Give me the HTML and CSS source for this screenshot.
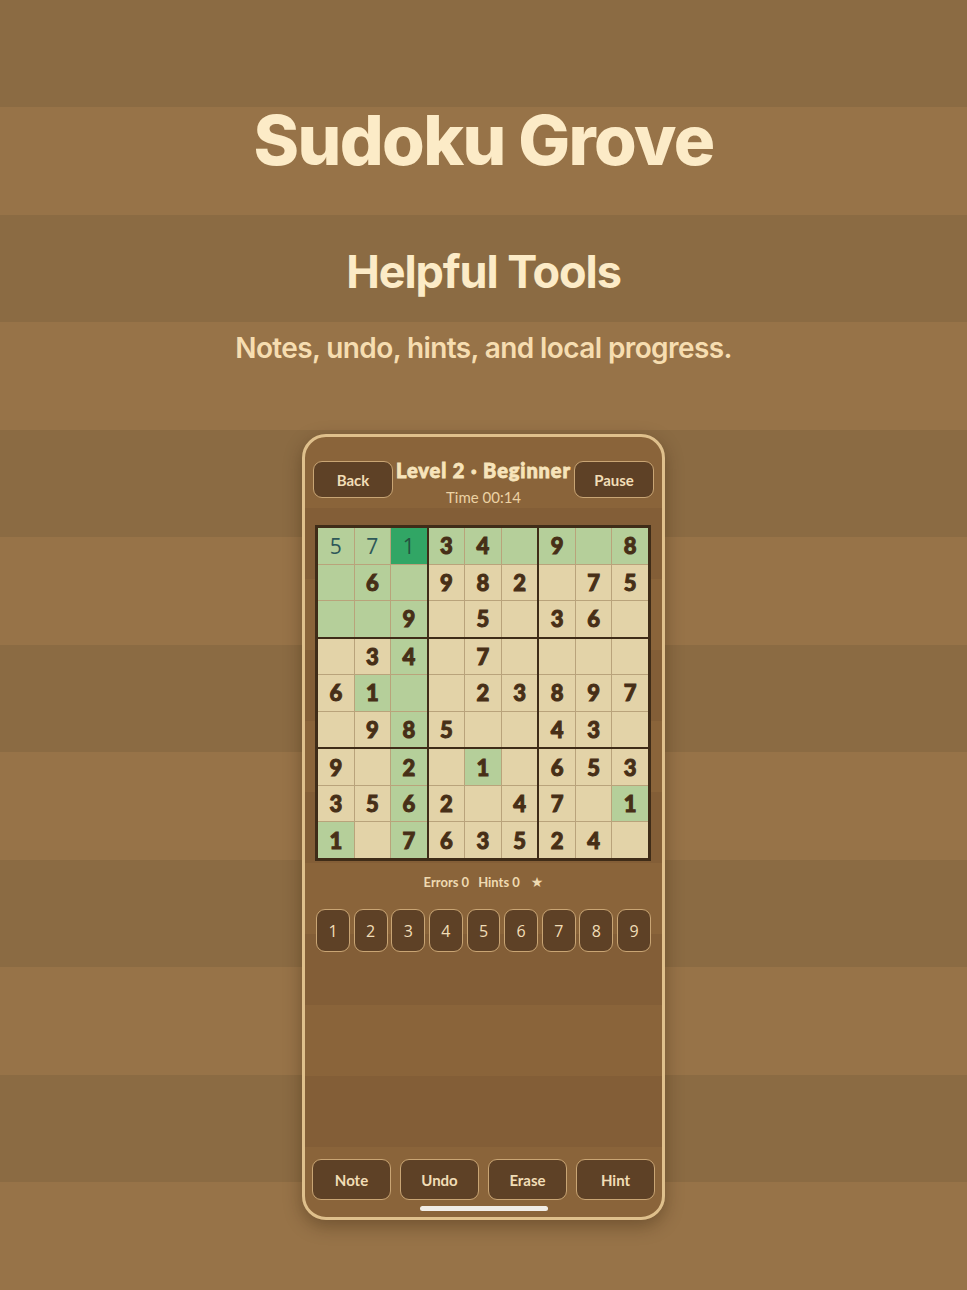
FILE: index.html
```html
<!DOCTYPE html>
<html lang="en">
<head>
<meta charset="utf-8">
<title>Sudoku Grove</title>
<link rel="stylesheet" href="styles.css">
</head>
<body>
<main class="page">
  <h1 class="app-title">Sudoku Grove</h1>
  <h2 class="feature-title">Helpful Tools</h2>
  <p class="feature-text">Notes, undo, hints, and local progress.</p>

  <div class="phone">
    <header class="game-bar">
      <button class="btn btn-bar">Back</button>
      <div class="game-info">
        <div class="level">Level 2 · Beginner</div>
        <div class="timer">Time 00:14</div>
      </div>
      <button class="btn btn-bar">Pause</button>
    </header>

    <div class="board">
      <div class="box">
        <div class="cell hl user">5</div><div class="cell hl user">7</div><div class="cell sel user">1</div>
        <div class="cell hl"></div><div class="cell hl">6</div><div class="cell hl"></div>
        <div class="cell hl"></div><div class="cell hl"></div><div class="cell hl">9</div>
      </div>
      <div class="box">
        <div class="cell hl">3</div><div class="cell hl">4</div><div class="cell hl"></div>
        <div class="cell">9</div><div class="cell">8</div><div class="cell">2</div>
        <div class="cell"></div><div class="cell">5</div><div class="cell"></div>
      </div>
      <div class="box">
        <div class="cell hl">9</div><div class="cell hl"></div><div class="cell hl">8</div>
        <div class="cell"></div><div class="cell">7</div><div class="cell">5</div>
        <div class="cell">3</div><div class="cell">6</div><div class="cell"></div>
      </div>

      <div class="box">
        <div class="cell"></div><div class="cell">3</div><div class="cell hl">4</div>
        <div class="cell">6</div><div class="cell hl">1</div><div class="cell hl"></div>
        <div class="cell"></div><div class="cell">9</div><div class="cell hl">8</div>
      </div>
      <div class="box">
        <div class="cell"></div><div class="cell">7</div><div class="cell"></div>
        <div class="cell"></div><div class="cell">2</div><div class="cell">3</div>
        <div class="cell">5</div><div class="cell"></div><div class="cell"></div>
      </div>
      <div class="box">
        <div class="cell"></div><div class="cell"></div><div class="cell"></div>
        <div class="cell">8</div><div class="cell">9</div><div class="cell">7</div>
        <div class="cell">4</div><div class="cell">3</div><div class="cell"></div>
      </div>

      <div class="box">
        <div class="cell">9</div><div class="cell"></div><div class="cell hl">2</div>
        <div class="cell">3</div><div class="cell">5</div><div class="cell hl">6</div>
        <div class="cell hl">1</div><div class="cell"></div><div class="cell hl">7</div>
      </div>
      <div class="box">
        <div class="cell"></div><div class="cell hl">1</div><div class="cell"></div>
        <div class="cell">2</div><div class="cell"></div><div class="cell">4</div>
        <div class="cell">6</div><div class="cell">3</div><div class="cell">5</div>
      </div>
      <div class="box">
        <div class="cell">6</div><div class="cell">5</div><div class="cell">3</div>
        <div class="cell">7</div><div class="cell"></div><div class="cell hl">1</div>
        <div class="cell">2</div><div class="cell">4</div><div class="cell"></div>
      </div>
    </div>

    <div class="status">
      <span>Errors 0</span><span>Hints 0</span><span class="star">★</span>
    </div>

    <div class="numpad">
      <button class="btn key">1</button>
      <button class="btn key">2</button>
      <button class="btn key">3</button>
      <button class="btn key">4</button>
      <button class="btn key">5</button>
      <button class="btn key">6</button>
      <button class="btn key">7</button>
      <button class="btn key">8</button>
      <button class="btn key">9</button>
    </div>

    <div class="spacer"></div>

    <div class="tools">
      <button class="btn tool">Note</button>
      <button class="btn tool">Undo</button>
      <button class="btn tool">Erase</button>
      <button class="btn tool">Hint</button>
    </div>
    <div class="home-indicator"></div>
  </div>
</main>
</body>
</html>
```

FILE: styles.css
```css
* {
  box-sizing: border-box;
}

html,
body {
  margin: 0;
  padding: 0;
}

body {
  width: 967px;
  height: 1290px;
  overflow: hidden;
  font-family: Inter, "Noto Sans", sans-serif;
  background: repeating-linear-gradient(
    to bottom,
    #8b6b43 0,
    #8b6b43 107.5px,
    #977348 107.5px,
    #977348 215px
  );
}

.page {
  display: flex;
  flex-direction: column;
  align-items: center;
  padding-top: 102px;
}

.app-title {
  margin: 0;
  font-size: 69px;
  line-height: 76px;
  font-weight: 800;
  letter-spacing: -1.6px;
  color: #fcebc7;
}

.feature-title {
  margin: 68px 0 0;
  font-size: 45px;
  line-height: 52px;
  font-weight: 700;
  letter-spacing: -1.1px;
  color: #fcebc7;
}

.feature-text {
  margin: 34px 0 0;
  font-size: 28px;
  line-height: 32px;
  font-weight: 600;
  letter-spacing: -0.6px;
  color: #f6ddb0;
}

/* device frame */
.phone {
  margin-top: 70px;
  width: 363px;
  height: 786px;
  border: 3px solid #dfc08c;
  border-radius: 24px;
  box-shadow: 0 6px 18px rgba(40, 22, 5, 0.35);
  display: flex;
  flex-direction: column;
  overflow: hidden;
  background: repeating-linear-gradient(
    to bottom,
    #8a643a 0,
    #8a643a 71px,
    #835e37 71px,
    #835e37 142px
  );
  font-family: Lato, "Open Sans", sans-serif;
}

.btn {
  font-family: Lato, "Open Sans", sans-serif;
  background: #5e4126;
  border: 1px solid #c9a574;
  border-radius: 9px;
  color: #f1ddb6;
  padding: 0;
  cursor: pointer;
}

.game-bar {
  display: flex;
  align-items: flex-start;
  padding: 24px 8px 0 8px;
  height: 88px;
}

.btn-bar {
  width: 80px;
  height: 37px;
  font-size: 15px;
  font-weight: 700;
}

.game-info {
  flex: 1;
  display: flex;
  flex-direction: column;
  align-items: center;
  margin-top: -3px;
}

/* heavy headline: bold face thickened with a stroke */
.level {
  font-size: 20px;
  line-height: 24px;
  font-weight: 900;
  color: #f7e4bb;
  white-space: nowrap;
  letter-spacing: 0.9px;
  -webkit-text-stroke: 0.8px #f7e4bb;
}

.timer {
  margin-top: 7px;
  font-size: 15px;
  line-height: 16px;
  font-weight: 400;
  color: #ecd2a4;
}

/* sudoku board: 3x3 boxes, each 3x3 cells */
.board {
  margin: 0 0 0 10px;
  width: 336px;
  height: 336px;
  border: 3px solid #3f2c18;
  background: #3f2c18;
  display: grid;
  grid-template-columns: repeat(3, 1fr);
  grid-template-rows: repeat(3, 1fr);
  gap: 2px;
}

.box {
  display: grid;
  grid-template-columns: repeat(3, 1fr);
  grid-template-rows: repeat(3, 1fr);
  gap: 1px;
  background: #b9a37b;
}

.cell {
  background: #e3d3a8;
  display: flex;
  align-items: center;
  justify-content: center;
  font-family: Lato, sans-serif;
  font-size: 22px;
  font-weight: 900;
  color: #472f17;
  -webkit-text-stroke: 1px #472f17;
}

.cell.hl {
  background: #b5cf9a;
}

.cell.sel {
  background: #31a665;
}

.cell.user {
  font-family: "Open Sans", sans-serif;
  font-weight: 400;
  font-size: 21px;
  color: #2e5859;
  -webkit-text-stroke: 0;
}

.cell.sel.user {
  color: #25523f;
}

.status {
  display: flex;
  justify-content: center;
  gap: 9px;
  margin-top: 13px;
  font-size: 13px;
  line-height: 16px;
  font-weight: 700;
  color: #efdab1;
}

.status .star {
  margin-left: 2px;
  font-family: "DejaVu Sans", sans-serif;
  font-size: 14px;
}

.numpad {
  display: flex;
  gap: 3.7px;
  margin: 19px 0 0 11px;
  width: 335px;
}

.key {
  flex: 1;
  height: 43px;
  font-family: "Open Sans", sans-serif;
  font-size: 16px;
  font-weight: 400;
}

.spacer {
  flex: 1;
}

.tools {
  display: flex;
  gap: 9px;
  padding: 0 7px 0 7px;
}

.tool {
  flex: 1;
  height: 41px;
  font-size: 15px;
  font-weight: 700;
}

.home-indicator {
  width: 128px;
  height: 5px;
  margin: 6px auto 6px;
  border-radius: 3px;
  background: #f1ede7;
}
```
